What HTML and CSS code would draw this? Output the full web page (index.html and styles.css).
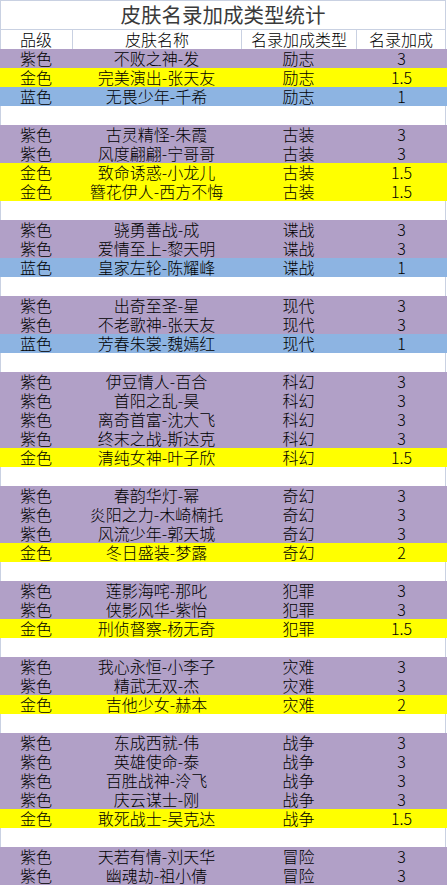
FILE: index.html
```html
<!DOCTYPE html>
<html lang="zh-CN">
<head>
<meta charset="utf-8">
<title>皮肤名录加成类型统计</title>
<link rel="stylesheet" href="styles.css">
</head>
<body>
<div class="sheet">
  <div class="title">皮肤名录加成类型统计</div>
  <div class="row head"><div>品级</div><div>皮肤名称</div><div>名录加成类型</div><div>名录加成</div></div>

  <div class="row p"><div>紫色</div><div>不败之神-发</div><div>励志</div><div>3</div></div>
  <div class="row g"><div>金色</div><div>完美演出-张天友</div><div>励志</div><div>1.5</div></div>
  <div class="row b"><div>蓝色</div><div>无畏少年-千希</div><div>励志</div><div>1</div></div>
  <div class="row blank"></div>

  <div class="row p"><div>紫色</div><div>古灵精怪-朱霞</div><div>古装</div><div>3</div></div>
  <div class="row p"><div>紫色</div><div>风度翩翩-宁哥哥</div><div>古装</div><div>3</div></div>
  <div class="row g"><div>金色</div><div>致命诱惑-小龙儿</div><div>古装</div><div>1.5</div></div>
  <div class="row g"><div>金色</div><div>簪花伊人-西方不悔</div><div>古装</div><div>1.5</div></div>
  <div class="row blank"></div>

  <div class="row p"><div>紫色</div><div>骁勇善战-成</div><div>谍战</div><div>3</div></div>
  <div class="row p"><div>紫色</div><div>爱情至上-黎天明</div><div>谍战</div><div>3</div></div>
  <div class="row b"><div>蓝色</div><div>皇家左轮-陈耀峰</div><div>谍战</div><div>1</div></div>
  <div class="row blank"></div>

  <div class="row p"><div>紫色</div><div>出奇至圣-星</div><div>现代</div><div>3</div></div>
  <div class="row p"><div>紫色</div><div>不老歌神-张天友</div><div>现代</div><div>3</div></div>
  <div class="row b"><div>蓝色</div><div>芳春朱裳-魏嫣红</div><div>现代</div><div>1</div></div>
  <div class="row blank"></div>

  <div class="row p"><div>紫色</div><div>伊豆情人-百合</div><div>科幻</div><div>3</div></div>
  <div class="row p"><div>紫色</div><div>首阳之乱-昊</div><div>科幻</div><div>3</div></div>
  <div class="row p"><div>紫色</div><div>离奇首富-沈大飞</div><div>科幻</div><div>3</div></div>
  <div class="row p"><div>紫色</div><div>终末之战-斯达克</div><div>科幻</div><div>3</div></div>
  <div class="row g"><div>金色</div><div>清纯女神-叶子欣</div><div>科幻</div><div>1.5</div></div>
  <div class="row blank"></div>

  <div class="row p"><div>紫色</div><div>春韵华灯-幂</div><div>奇幻</div><div>3</div></div>
  <div class="row p"><div>紫色</div><div>炎阳之力-木崎楠托</div><div>奇幻</div><div>3</div></div>
  <div class="row p"><div>紫色</div><div>风流少年-郭天城</div><div>奇幻</div><div>3</div></div>
  <div class="row g"><div>金色</div><div>冬日盛装-梦露</div><div>奇幻</div><div>2</div></div>
  <div class="row blank"></div>

  <div class="row p"><div>紫色</div><div>莲影海咤-那叱</div><div>犯罪</div><div>3</div></div>
  <div class="row p"><div>紫色</div><div>侠影风华-紫怡</div><div>犯罪</div><div>3</div></div>
  <div class="row g"><div>金色</div><div>刑侦督察-杨无奇</div><div>犯罪</div><div>1.5</div></div>
  <div class="row blank"></div>

  <div class="row p"><div>紫色</div><div>我心永恒-小李子</div><div>灾难</div><div>3</div></div>
  <div class="row p"><div>紫色</div><div>精武无双-杰</div><div>灾难</div><div>3</div></div>
  <div class="row g"><div>金色</div><div>吉他少女-赫本</div><div>灾难</div><div>2</div></div>
  <div class="row blank"></div>

  <div class="row p"><div>紫色</div><div>东成西就-伟</div><div>战争</div><div>3</div></div>
  <div class="row p"><div>紫色</div><div>英雄使命-泰</div><div>战争</div><div>3</div></div>
  <div class="row p"><div>紫色</div><div>百胜战神-泠飞</div><div>战争</div><div>3</div></div>
  <div class="row p"><div>紫色</div><div>庆云谋士-刚</div><div>战争</div><div>3</div></div>
  <div class="row g"><div>金色</div><div>敢死战士-吴克达</div><div>战争</div><div>1.5</div></div>
  <div class="row blank"></div>

  <div class="row p"><div>紫色</div><div>天若有情-刘天华</div><div>冒险</div><div>3</div></div>
  <div class="row p"><div>紫色</div><div>幽魂劫-祖小倩</div><div>冒险</div><div>3</div></div>
</div>
</body>
</html>
```

FILE: styles.css
```css
html, body {
  margin: 0;
  padding: 0;
  background: #ffffff;
}

body {
  font-family: "Noto Sans CJK SC", "Noto Sans", sans-serif;
  font-size: 16px;
  font-weight: 300;
  color: #000000;
  overflow: hidden;
}

.sheet {
  width: 447px;
  height: 885px;
  overflow: hidden;
}

.title,
.head,
.blank {
  background:
    linear-gradient(#c9d1e2, #c9d1e2) 0 0 / 1px 100% no-repeat,
    linear-gradient(#c9d1e2, #c9d1e2) 445px 0 / 1px 100% no-repeat,
    #ffffff;
}

.title {
  box-sizing: border-box;
  height: 30px;
  border-top: 1px solid #c9d1e2;
  border-bottom: 1px solid #c9d1e2;
  width: 446px;
  text-align: center;
  font-size: 20.5px;
  line-height: 27px;
  color: #3a3a3a;
  font-weight: 400;
}

.row {
  display: grid;
  grid-template-columns: 72px 169px 115px 91px;
  height: 19px;
  line-height: 19px;
}

.row > div {
  text-align: center;
  white-space: nowrap;
  box-sizing: border-box;
}

.head {
  width: 446px;
  grid-template-columns: 72px 169px 115px 90px;
}

.head > div + div {
  border-left: 1px solid #c9d1e2;
}

.head > div:last-child {
  border-right: 1px solid #c9d1e2;
}

.p { background: #b1a0c7; }
.g { background: #ffff00; }
.b { background: #8db4e2; }

.blank {
  width: 446px;
}
```
